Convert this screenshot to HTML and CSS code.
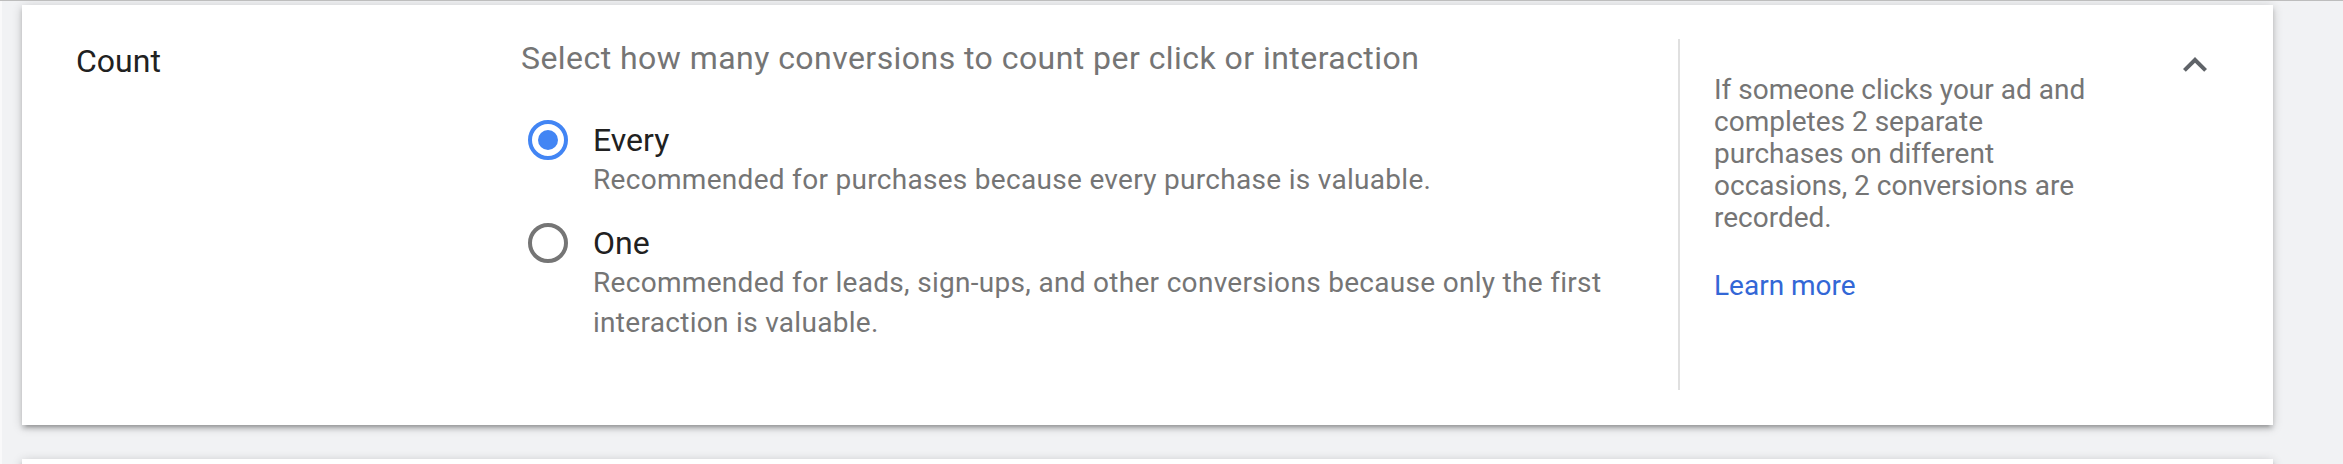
FILE: index.html
```html
<!DOCTYPE html>
<html>
<head>
  <title>Conversion settings - Count</title>
  <link rel="stylesheet" href="styles.css">
</head>
<body>
  <div class="page">
    <div class="card">
      <div class="label">Count</div>

      <div class="main">
        <div class="question">Select how many conversions to count per click or interaction</div>

        <div class="option">
          <span class="radio checked"></span>
          <div class="option-title">Every</div>
          <div class="option-desc">Recommended for purchases because every purchase is valuable.</div>
        </div>

        <div class="option">
          <span class="radio"></span>
          <div class="option-title">One</div>
          <div class="option-desc">Recommended for leads, sign-ups, and other conversions because only the first interaction is valuable.</div>
        </div>
      </div>

      <div class="divider"></div>

      <div class="help">
        <p>If someone clicks your ad and completes 2 separate purchases on different occasions, 2 conversions are recorded.</p>
        <a href="#" class="learn">Learn more</a>
      </div>

      <!-- collapse section -->
      <button class="toggle" title="Collapse">
        <svg width="48" height="48" viewBox="0 0 24 24"><path d="M12 8l-6 6 1.41 1.41L12 10.83l4.59 4.58L18 14z" fill="#5f6368"/></svg>
      </button>
    </div>

    <div class="card next"></div>
  </div>
</body>
</html>
```

FILE: styles.css
```css
body {
  margin: 0;
  background-color: #f1f2f4;
  border-top: 1px solid #bdbdbd;
  font-family: Roboto, "Noto Sans", Arial, sans-serif;
  overflow: hidden;
}

.page {
  border-left: 2px solid #f9f9fa;
  padding: 4px 70px 0 20px;
}

.card {
  background-color: #fff;
  display: flex;
  height: 420px;
  box-shadow: 0 4px 4px rgba(0, 0, 0, 0.14), 0 6px 2px -4px rgba(0, 0, 0, 0.12), 0 2px 10px rgba(0, 0, 0, 0.2);
}

.card.next {
  height: 60px;
  margin-top: 34px;
}

.label {
  width: 445px;
  flex-shrink: 0;
  padding: 36px 0 0 54px;
  font-size: 32px;
  line-height: 40px;
  color: #212121;
}

.main {
  width: 1097px;
  flex-shrink: 0;
  padding: 33px 60px 0 0;
}

.question {
  font-size: 32px;
  line-height: 40px;
  letter-spacing: 0.45px;
  color: #757575;
  margin-bottom: 42px;
}

.option {
  display: grid;
  grid-template-columns: 40px 1fr;
  column-gap: 25px;
  margin-left: 7px;
  margin-bottom: 23px;
}

.radio {
  grid-row: 1;
  width: 40px;
  height: 40px;
  box-sizing: border-box;
  border: 4px solid #757575;
  border-radius: 50%;
  position: relative;
}

.radio.checked {
  border-color: #4285f4;
}

.radio.checked::after {
  content: "";
  position: absolute;
  left: 6px;
  top: 6px;
  width: 20px;
  height: 20px;
  border-radius: 50%;
  background-color: #4285f4;
}

.option-title {
  grid-column: 2;
  font-size: 32px;
  line-height: 40px;
  color: #212121;
}

.option-desc {
  grid-column: 2;
  font-size: 28px;
  line-height: 40px;
  letter-spacing: 0.3px;
  color: #757575;
}

.divider {
  width: 2px;
  flex-shrink: 0;
  background-color: #e0e0e0;
  margin: 34px 0 35px;
}

.help {
  width: 390px;
  flex-shrink: 0;
  padding: 69px 0 0 34px;
  font-size: 28px;
  line-height: 32px;
  color: #757575;
}

.help p {
  margin: 0 0 36px;
}

.learn {
  color: #3367d6;
  text-decoration: none;
}

.toggle {
  margin: 36px 54px 0 auto;
  align-self: flex-start;
  padding: 0;
  border: none;
  background: none;
  width: 48px;
  height: 48px;
  cursor: pointer;
}

.toggle svg {
  display: block;
}
```
